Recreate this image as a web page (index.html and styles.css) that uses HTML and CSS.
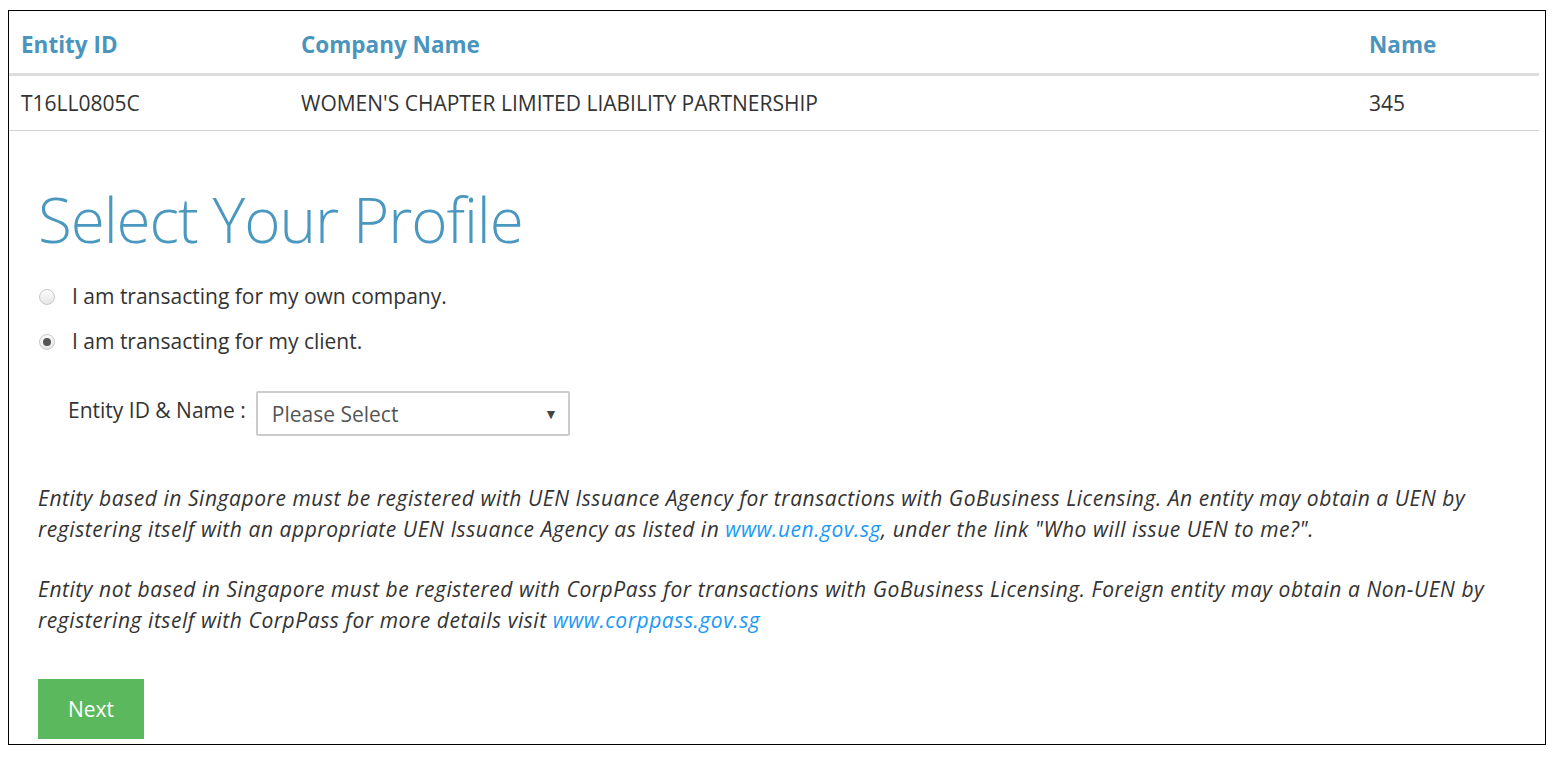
FILE: index.html
```html
<!DOCTYPE html>
<html lang="en">
<head>
    <meta charset="UTF-8">
    <title>Select Your Profile</title>
    <link rel="stylesheet" href="styles.css">
</head>
<body>
<div class="panel">
    <!-- Selected entity -->
    <table class="entity-table">
        <thead>
            <tr>
                <th class="col-id">Entity ID</th>
                <th>Company Name</th>
                <th class="col-name">Name</th>
            </tr>
        </thead>
        <tbody>
            <tr>
                <td>T16LL0805C</td>
                <td>WOMEN'S CHAPTER LIMITED LIABILITY PARTNERSHIP</td>
                <td>345</td>
            </tr>
        </tbody>
    </table>

    <!-- Profile selection -->
    <div class="content">
        <h1 class="title">Select Your Profile</h1>
        <label class="choice"><input type="radio" name="profile"> I am transacting for my own company.</label>
        <label class="choice"><input type="radio" name="profile" checked> I am transacting for my client.</label>

        <div class="entity-row">
            <span class="entity-label">Entity ID &amp; Name :</span>
            <div class="select">
                <span>Please Select</span>
                <span class="arrow">&#9660;</span>
            </div>
        </div>

        <p class="note">Entity based in Singapore must be registered with UEN Issuance Agency for transactions with GoBusiness Licensing. An entity may obtain a UEN by registering itself with an appropriate UEN Issuance Agency as listed in <a href="#">www.uen.gov.sg</a>, under the link "Who will issue UEN to me?".</p>
        <p class="note">Entity not based in Singapore must be registered with CorpPass for transactions with GoBusiness Licensing. Foreign entity may obtain a Non-UEN by registering itself with CorpPass for more details visit <a href="#">www.corppass.gov.sg</a></p>

        <button class="btn-next">Next</button>
    </div>
</div>
</body>
</html>
```

FILE: styles.css
```css
body { margin: 0; padding: 10px 16px 0 8px; font-family: "Open Sans", Arial, sans-serif; color: #333; background: #fff; }
.panel { border: 1px solid #000; height: 735px; box-sizing: border-box; overflow: hidden; }

.entity-table { width: calc(100% - 6px); border-collapse: collapse; }
.entity-table th { text-align: left; color: #4a95bd; font-size: 22.5px; font-weight: 700; line-height: 30px; padding: 19px 12px 13px; border-bottom: 3px solid #ddd; }
.entity-table td { font-size: 21px; line-height: 26px; padding: 14px 12px; border-bottom: 1px solid #d4d4d4; }
.entity-table .col-id { width: 256px; }
.entity-table .col-name { width: 158px; }

.content { padding: 0 29px; }
.title { font-size: 62px; font-weight: 300; color: #4a98bf; margin: 48px 0 15px; line-height: 80px; letter-spacing: -1.1px; }

.choice { display: flex; align-items: center; gap: 17px; font-size: 21px; line-height: 45px; }
.choice input { appearance: none; -webkit-appearance: none; margin: 0 0 0 1px; width: 16px; height: 16px; border-radius: 50%; border: 1px solid #c8c8c8; background: linear-gradient(#fdfdfd, #e6e6e6); position: relative; }
.choice input:checked::after { content: ""; position: absolute; left: 3px; top: 3px; width: 8px; height: 8px; border-radius: 50%; background: #555; }

.entity-row { display: flex; align-items: center; gap: 10px; margin: 27px 0 0 30px; }
.entity-label { font-size: 21px; padding-bottom: 8px; }
.select { width: 314px; height: 45px; box-sizing: border-box; border: 2px solid #ccc; border-radius: 2px; display: flex; align-items: center; justify-content: space-between; padding: 0 10px 0 14px; font-size: 21px; color: #555; }
.select .arrow { font-size: 14px; color: #444; }

.note { font-style: italic; font-size: 21px; line-height: 31px; letter-spacing: 0.55px; margin: 0; }
.entity-row + .note { margin-top: 47px; }
.note + .note { margin-top: 29px; }
.note a { color: #1a9af5; text-decoration: none; }

.btn-next { margin-top: 43px; width: 106px; height: 60px; border: none; background: #5cb85c; color: #fff; font-family: "Open Sans", Arial, sans-serif; font-size: 21px; }
```
